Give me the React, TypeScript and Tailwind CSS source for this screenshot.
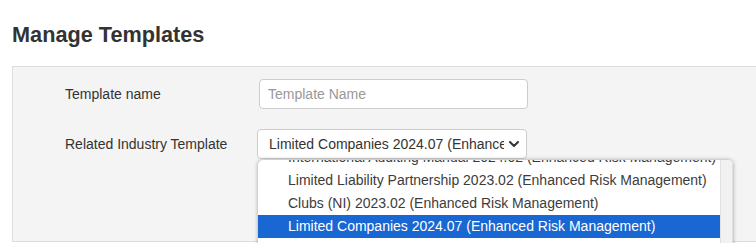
const options = [
  "International Auditing Manual 2024.02 (Enhanced Risk Management)",
  "Limited Liability Partnership 2023.02 (Enhanced Risk Management)",
  "Clubs (NI) 2023.02 (Enhanced Risk Management)",
  "Limited Companies 2024.07 (Enhanced Risk Management)",
  "Charities 2024.01 (Enhanced Risk Management)",
];

const selected = "Limited Companies 2024.07 (Enhanced Risk Management)";

export default function App() {
  return (
    <div className="relative h-[243px] w-[756px] overflow-hidden bg-white font-['Liberation_Sans',Arial,sans-serif] text-[#333]">
      <h1 className="px-3 pt-[23px] text-[21.7px] font-bold leading-[24px] text-[#333]">
        Manage Templates
      </h1>

      <div className="ml-3 mt-[19px] h-[176px] border border-r-0 border-[#ddd] bg-[#f4f4f4] pl-[52px] pt-3">
        <div className="flex items-center">
          <label className="w-[194px] text-[14px]">Template name</label>
          <input
            type="text"
            placeholder="Template Name"
            className="h-[30px] w-[269px] rounded border border-[#ccc] bg-white px-2 text-[14px] placeholder:text-[#999] focus:outline-none"
          />
        </div>

        <div className="mt-[20px] flex items-center">
          <label className="w-[192px] text-[14px]">Related Industry Template</label>
          <div className="flex h-[30px] w-[270px] items-center rounded border border-[#ccc] bg-white pl-[11px] pr-[6px] text-[14px]">
            <span className="flex-1 overflow-hidden whitespace-nowrap">{selected}</span>
            <svg width="12" height="8" viewBox="0 0 12 8" className="ml-1 shrink-0">
              <path d="M2 2 L6 6 L10 2" fill="none" stroke="#333" strokeWidth="2" strokeLinecap="round" strokeLinejoin="round" />
            </svg>
          </div>
        </div>
      </div>

      {/* open option list of the select */}
      <div className="absolute left-[258px] top-[160px] flex h-[90px] w-[475px] overflow-hidden rounded-t-[5px] bg-white shadow-[0_0_4px_rgba(0,0,0,0.35)]">
        <ul className="-mt-[14px] flex-1 text-[14px] text-[#3c3c3c]">
          {options.map((o) => (
            <li
              key={o}
              className={
                o === selected
                  ? "h-[23px] whitespace-nowrap bg-[#1967d2] pl-[30px] leading-[23px] text-white"
                  : "h-[23px] whitespace-nowrap pl-[30px] leading-[23px]"
              }
            >
              {o}
            </li>
          ))}
        </ul>
        <div className="w-[13px] shrink-0 border-x border-[#e0e0e0] bg-[#f1f1f1]" />
      </div>
    </div>
  );
}
